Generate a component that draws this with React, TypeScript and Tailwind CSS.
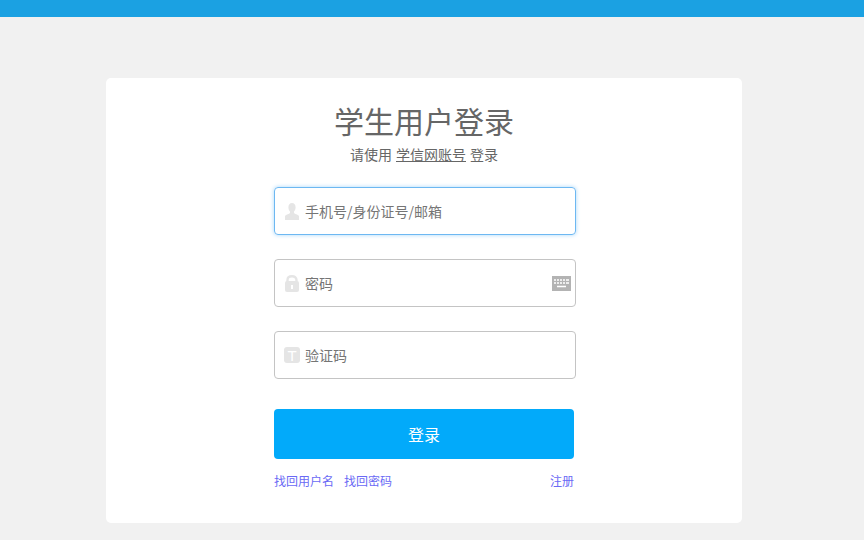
import React from 'react';

const UserIcon = () => (
  <svg width="14" height="17" viewBox="0 0 14 17" fill="#e5e5e5">
    <path d="M7 0c2.200 0 3.600 1.700 3.600 4.200 0 1.800-.7 3.300-1.600 4.200v1.300c0 .5 1 1 2.300 1.500 1.600.6 2.700 1.200 2.700 2.300V17H0v-3.500c0-1.100 1.100-1.700 2.700-2.300C4 10.700 5 10.200 5 9.700V8.400C4.100 7.500 3.400 6 3.400 4.200 3.400 1.700 4.800 0 7 0z" />
  </svg>
);

const LockIcon = () => (
  <svg width="14" height="17" viewBox="0 0 14 17">
    <path d="M2.500 8V5C2.500 2.500 4.400 1.200 7 1.200s4.500 1.300 4.500 3.800v3" fill="none" stroke="#e5e5e5" strokeWidth="2.400" />
    <rect x="0" y="6" width="14" height="11" rx="2" fill="#e5e5e5" />
    <rect x="6" y="10" width="2" height="4" fill="#ffffff" />
  </svg>
);

const KeyboardIcon = () => (
  <svg width="19" height="15" viewBox="0 0 19 15">
    <rect width="19" height="15" fill="#b3b3b3" />
    <path d="M2 4h2M5 4h2M8 4h2M11 4h2M14 4h3M2 7h2M5 7h2M8 7h2M11 7h2M14 7h3M5 10.500h9" stroke="#ffffff" strokeWidth="1.500" />
  </svg>
);

const CodeIcon = () => (
  <div className="w-4 h-4 rounded-[3px] bg-[#e5e5e5] flex items-center justify-center text-white text-[15px] leading-none font-['Liberation_Sans',sans-serif]">
    T
  </div>
);

interface FieldProps {
  icon: React.ReactNode;
  label: string;
  focused?: boolean;
  right?: React.ReactNode;
}

const Field: React.FC<FieldProps> = ({ icon, label, focused, right }) => (
  <div
    className={`w-[302px] h-12 rounded-[4px] border flex items-center pl-[9px] pr-[4px] ${
      focused ? 'border-[#6db8f2] shadow-[0_0_4px_#a9d8fa]' : 'border-[#c4c4c4]'
    }`}
  >
    <div className="w-[16px] flex justify-center">{icon}</div>
    <span className="ml-[5px] text-[14px] text-[#757575]">{label}</span>
    {right && <div className="ml-auto flex">{right}</div>}
  </div>
);

export default function App() {
  return (
    <div className="h-[540px] overflow-hidden bg-[#f1f1f1] font-['Noto_Sans_CJK_SC',sans-serif]">
      <div className="h-[17px] bg-[#1ba1e2]" />

      <div className="w-[636px] h-[445px] mt-[61px] ml-[106px] bg-white rounded-[5px] flex flex-col items-center">
        <h1 className="mt-[20px] text-[30px] leading-[44px] font-normal text-[#666666]">学生用户登录</h1>
        <p className="mt-[2px] text-[14px] leading-[20px] text-[#666666]">
          请使用<span className="mx-[4px] underline">学信网账号</span>登录
        </p>

        <div className="ml-[2px] mt-[23px] flex flex-col gap-6">
          <Field focused icon={<UserIcon />} label="手机号/身份证号/邮箱" />
          <Field icon={<LockIcon />} label="密码" right={<KeyboardIcon />} />
          <Field icon={<CodeIcon />} label="验证码" />
        </div>

        <div className="ml-[2px] w-[302px] mt-[30px]">
          <button className="w-[300px] h-[50px] rounded-[4px] bg-[#02aafa] text-white text-[16px]">登录</button>
          <div className="w-[300px] mt-[13px] flex text-[12px] leading-[18px] text-[#6a6af5]">
            <span>找回用户名</span>
            <span className="ml-[10px]">找回密码</span>
            <span className="ml-auto">注册</span>
          </div>
        </div>
      </div>
    </div>
  );
}
